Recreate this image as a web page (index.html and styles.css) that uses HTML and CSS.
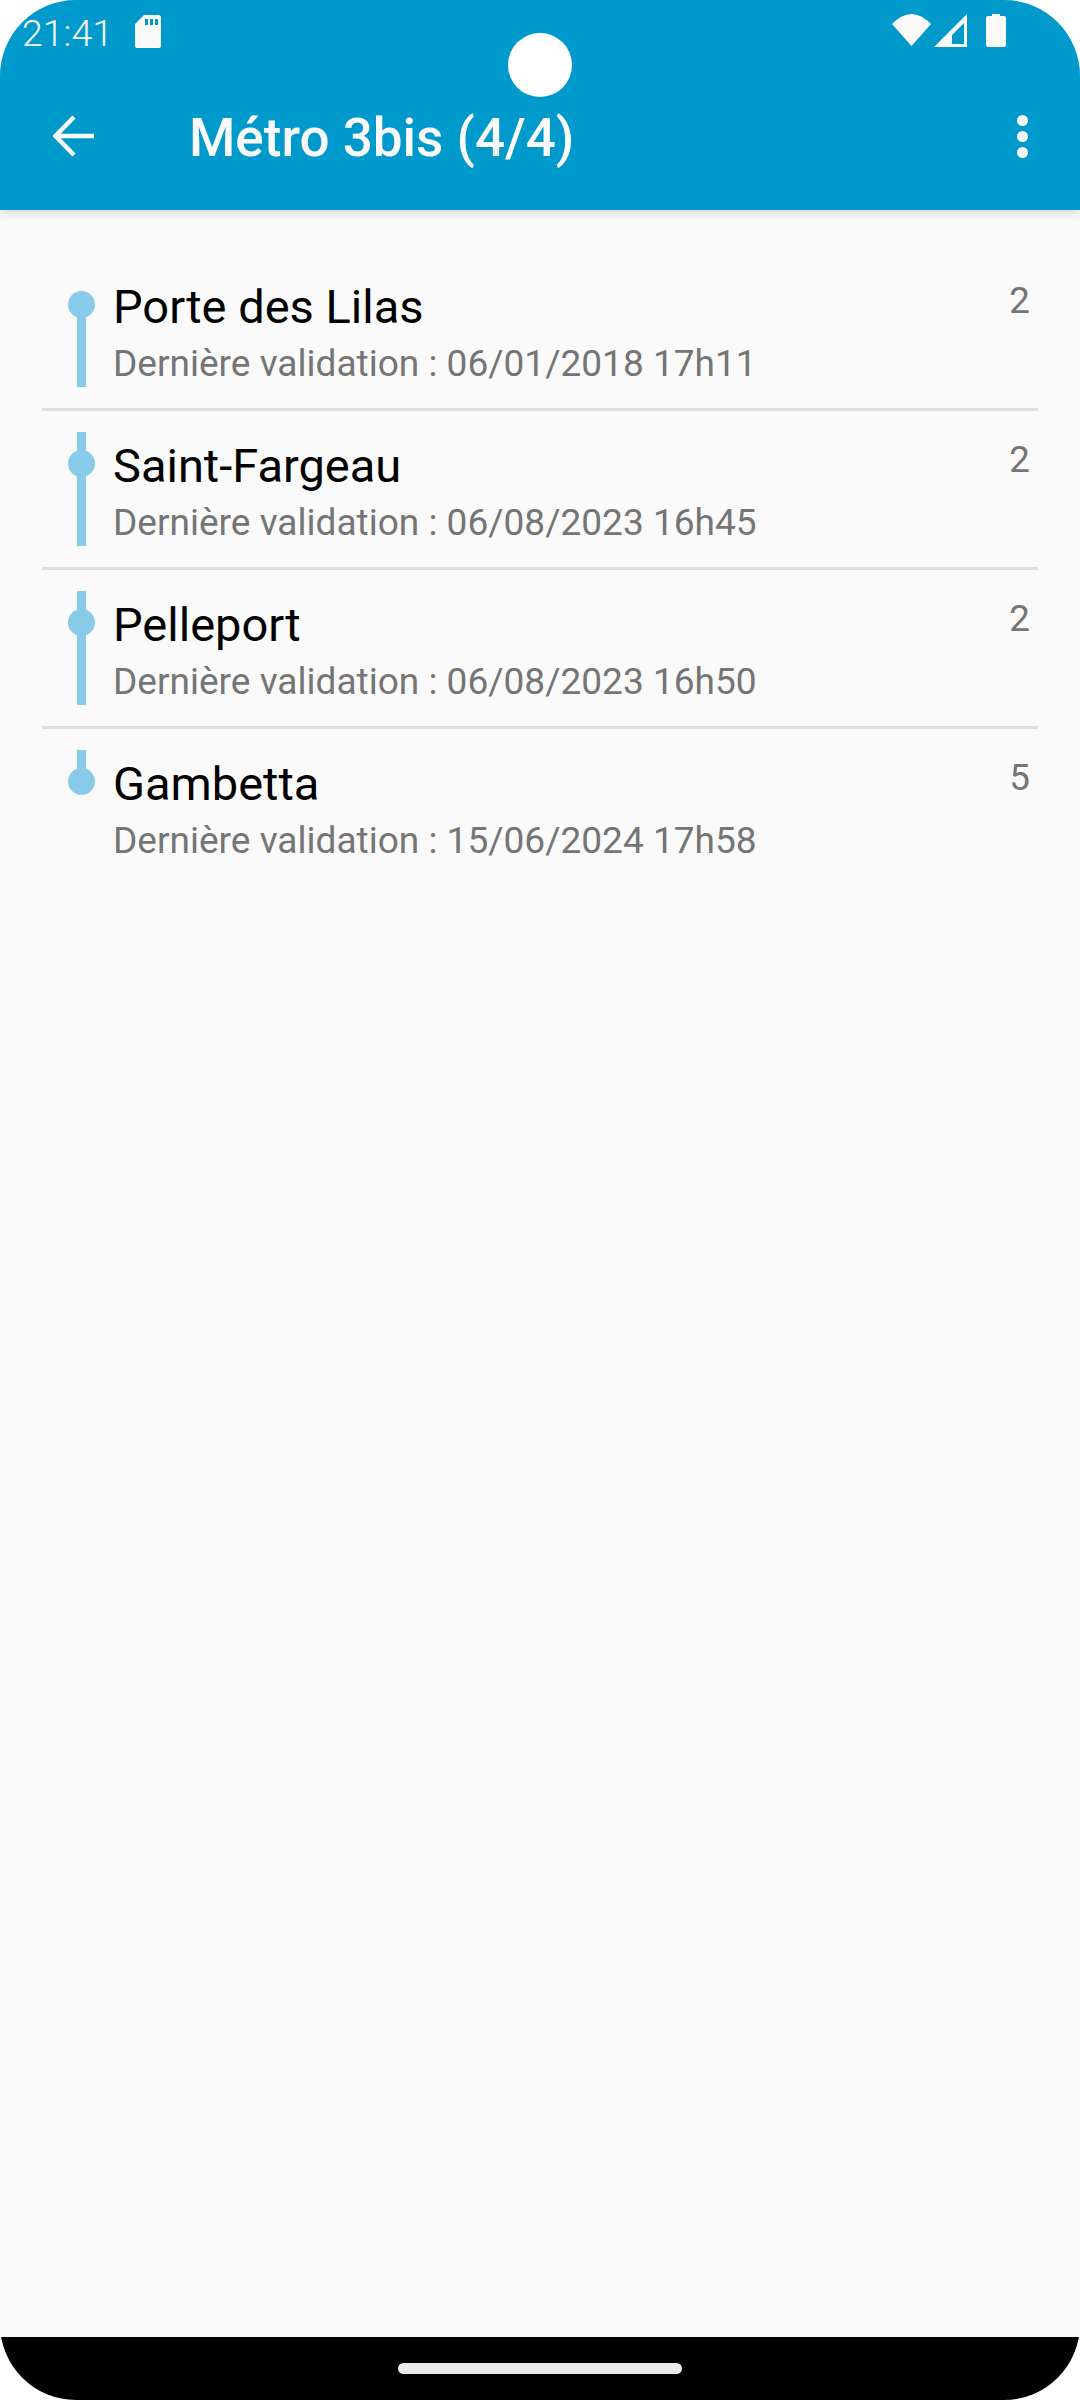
FILE: index.html
```html
<!DOCTYPE html>
<html lang="fr">

<head>
  <meta charset="UTF-8">
  <meta name="viewport" content="width=device-width, initial-scale=1.0">
  <title>Métro 3bis</title>
  <link rel="stylesheet" href="styles.css">
</head>

<body>
  <div class="screen">
    <div class="camera"></div>

    <header class="header">
      <div class="status-bar">
        <div class="status-left">
          <span class="status-time">21:41</span>
          <svg class="icon-sd" viewBox="0 0 26 33">
            <path fill-rule="evenodd" d="M9 0H23Q26 0 26 3V31Q26 33 24 33H2Q0 33 0 31V9ZM10 4V10H13V4ZM15 4V10H18V4ZM20 4V10H23V4Z" />
          </svg>
        </div>
        <div class="status-right">
          <svg class="icon-wifi" viewBox="0 0 39 32">
            <path d="M0 10Q19.500 -10 39 10L19.500 32Z" />
          </svg>
          <svg class="icon-signal" viewBox="0 0 33 33">
            <path fill-rule="evenodd" d="M33 0V33H0ZM30 9 18 21V30H30Z" />
          </svg>
          <svg class="icon-battery" viewBox="0 0 20 33">
            <path d="M6 0H14V2H18Q20 2 20 4V31Q20 33 18 33H2Q0 33 0 31V4Q0 2 2 2H6Z" />
          </svg>
        </div>
      </div>

      <div class="toolbar">
        <svg class="icon-back" viewBox="0 0 42 42">
          <path d="M41 21H3M21 2 2.500 21 21 40" />
        </svg>
        <h1 class="toolbar-title">Métro 3bis (4/4)</h1>
        <div class="menu-dots">
          <span></span>
          <span></span>
          <span></span>
        </div>
      </div>
    </header>

    <div class="station-list">
      <div class="station">
        <div class="marker marker-first">
          <div class="marker-line"></div>
          <div class="marker-dot"></div>
        </div>
        <div class="station-text">
          <div class="station-name">Porte des Lilas</div>
          <div class="station-date">Dernière validation : 06/01/2018 17h11</div>
        </div>
        <div class="station-count">2</div>
      </div>

      <div class="station">
        <div class="marker">
          <div class="marker-line"></div>
          <div class="marker-dot"></div>
        </div>
        <div class="station-text">
          <div class="station-name">Saint-Fargeau</div>
          <div class="station-date">Dernière validation : 06/08/2023 16h45</div>
        </div>
        <div class="station-count">2</div>
      </div>

      <div class="station">
        <div class="marker">
          <div class="marker-line"></div>
          <div class="marker-dot"></div>
        </div>
        <div class="station-text">
          <div class="station-name">Pelleport</div>
          <div class="station-date">Dernière validation : 06/08/2023 16h50</div>
        </div>
        <div class="station-count">2</div>
      </div>

      <div class="station">
        <div class="marker marker-last">
          <div class="marker-line"></div>
          <div class="marker-dot"></div>
        </div>
        <div class="station-text">
          <div class="station-name">Gambetta</div>
          <div class="station-date">Dernière validation : 15/06/2024 17h58</div>
        </div>
        <div class="station-count">5</div>
      </div>
    </div>

    <div class="nav-bar">
      <div class="nav-handle"></div>
    </div>
  </div>
</body>

</html>
```

FILE: styles.css
```css
:root {
  --header-color: #0099CC;
  --line-color: #87CBE8;
  --on-header: #FAFAFA;
}

* {
  padding: 0;
  margin: 0;
  box-sizing: border-box;
}

html,
body {
  width: 1080px;
  height: 2400px;
  background-color: #fff;
  overflow: hidden;
}

body {
  font-family: Roboto, "Noto Sans", sans-serif;
}

.screen {
  position: relative;
  display: flex;
  flex-direction: column;
  width: 1080px;
  height: 2400px;
  border-radius: 76px;
  overflow: hidden;
  background-color: #FAFAFA;
}

.camera {
  position: absolute;
  z-index: 2;
  top: 33px;
  left: 508px;
  width: 64px;
  height: 64px;
  border-radius: 50%;
  background-color: #fff;
}

/* header */
.header {
  position: relative;
  z-index: 1;
  height: 210px;
  flex-shrink: 0;
  background-color: var(--header-color);
  box-shadow: 0 3px 10px rgba(0, 0, 0, .14);
}

.status-bar {
  display: flex;
  justify-content: space-between;
  align-items: flex-start;
  height: 84px;
  padding: 14px 74px 0 22px;
}

.status-left {
  display: flex;
  align-items: flex-start;
}

.status-time {
  font-size: 37.500px;
  font-weight: 300;
  line-height: 38px;
  color: var(--on-header);
}

.status-left svg,
.status-right svg {
  display: block;
  fill: var(--on-header);
}

.icon-sd {
  width: 26px;
  height: 33px;
  margin-left: 22px;
  margin-top: 1px;
}

.status-right {
  display: flex;
}

.icon-wifi {
  width: 39px;
  height: 32px;
}

.icon-signal {
  width: 33px;
  height: 33px;
  margin-left: 3px;
}

.icon-battery {
  width: 20px;
  height: 33px;
  margin-left: 19px;
}

.toolbar {
  display: flex;
  align-items: center;
  height: 104px;
  padding: 0 52px 0 53px;
}

.icon-back {
  width: 42px;
  height: 42px;
  flex-shrink: 0;
  fill: none;
  stroke: var(--on-header);
  stroke-width: 4.500;
}

.toolbar-title {
  flex: 1;
  margin-left: 94px;
  margin-top: 4px;
  font-size: 53px;
  font-weight: 500;
  color: var(--on-header);
}

.menu-dots {
  display: flex;
  flex-direction: column;
  gap: 5px;
}

.menu-dots span {
  width: 11px;
  height: 11px;
  border-radius: 50%;
  background-color: var(--on-header);
}

/* station list */
.station-list {
  flex: 1;
  padding: 42px 42px 0;
}

.station {
  display: flex;
  height: 159px;
  padding: 21px 8px 24px 26px;
  border-bottom: 3px solid #DEDEDE;
}

.station:last-child {
  border-bottom: none;
}

.marker {
  position: relative;
  display: flex;
  flex-direction: column;
  align-items: center;
  width: 27px;
  height: 114px;
  flex-shrink: 0;
}

.marker-line {
  width: 9px;
  height: 100%;
  background-color: var(--line-color);
}

.marker-first .marker-line {
  height: 83px;
  margin-top: 31px;
}

.marker-last .marker-line {
  height: 32px;
}

.marker-dot {
  position: absolute;
  top: 18px;
  left: 0;
  width: 27px;
  height: 27px;
  border-radius: 50%;
  background-color: var(--line-color);
}

.station-text {
  flex: 1;
  margin-left: 18px;
}

.station-name {
  font-size: 47px;
  line-height: 56px;
  margin-top: 6px;
  color: #000;
}

.station-date {
  font-size: 37.050px;
  line-height: 44px;
  margin-top: 7px;
  color: #757575;
}

.station-count {
  font-size: 36.750px;
  line-height: 44px;
  margin-top: 6px;
  color: #757575;
}

/* nav */
.nav-bar {
  display: flex;
  justify-content: center;
  height: 63px;
  flex-shrink: 0;
  padding-top: 26px;
  background-color: #000;
}

.nav-handle {
  width: 284px;
  height: 11px;
  border-radius: 6px;
  background-color: #E9EAEC;
}
```
